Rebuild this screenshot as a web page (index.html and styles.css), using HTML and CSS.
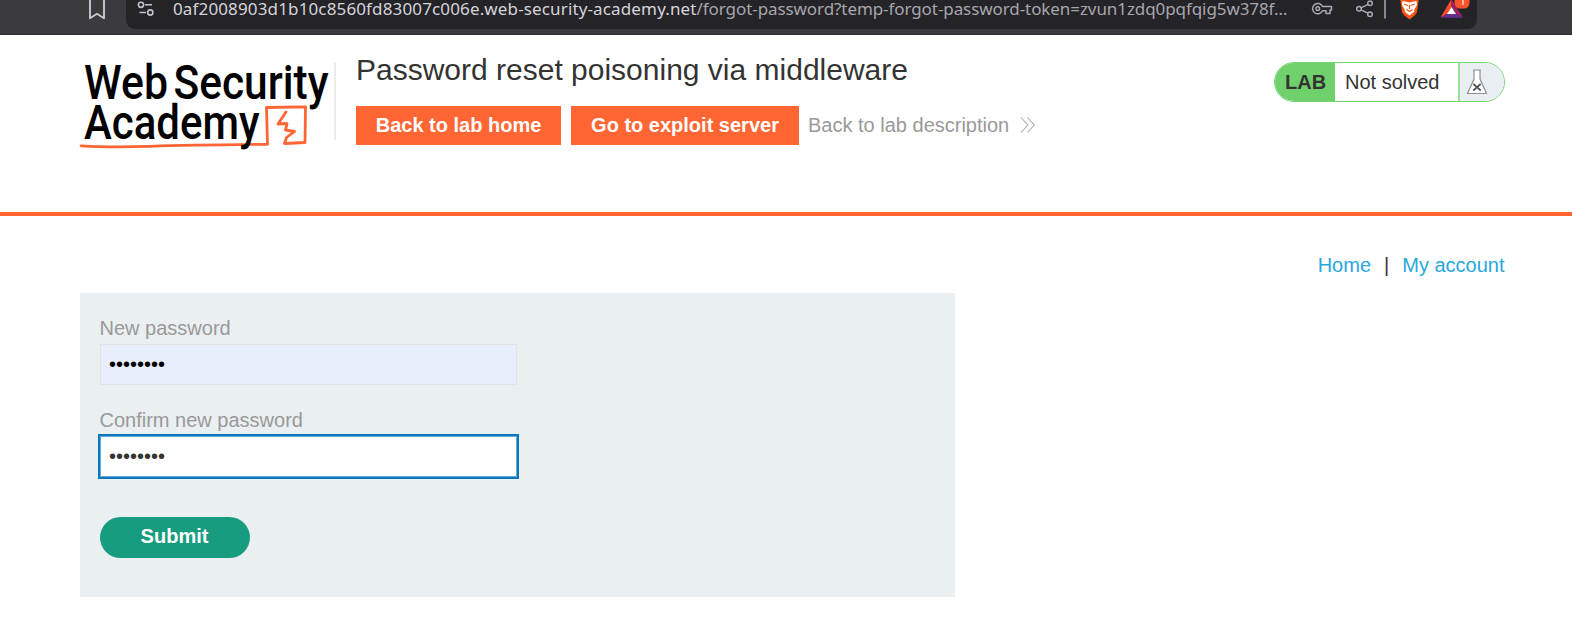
FILE: index.html
```html
<!DOCTYPE html>
<html lang="en">
<head>
<meta charset="utf-8">
<title>Password reset poisoning via middleware</title>
<link rel="stylesheet" href="styles.css">
</head>
<body>
<div class="browser">
  <svg class="bookmark" width="18" height="20" viewBox="0 0 18 20"><path d="M2 -2V18.300L9 13.800L16 18.300V-2" fill="none" stroke="#c9c8cd" stroke-width="1.900" stroke-linejoin="round"/></svg>
  <div class="address">
    <svg class="tune" width="18" height="17" viewBox="0 0 18 17" fill="none" stroke="#c4c3c9" stroke-width="1.600"><circle cx="4" cy="4.800" r="2.600"/><path d="M8 4.800H15M2.500 12.500H9"/><circle cx="13.300" cy="12.500" r="2.600"/></svg>
    <div class="url"><span class="domain">0af2008903d1b10c8560fd83007c006e.web-security-academy.net</span><span class="path">/forgot-password?temp-forgot-password-token=zvun1zdq0pqfqig5w378f…</span></div>
    <svg class="tools" width="170" height="29" viewBox="1310 0 170 29" fill="none">
      <g stroke="#aaa9b0" stroke-width="1.500"><path d="M1322.500 6.500H1331.500V10H1330V13.500H1326V10.800H1322.500A5.200 5.200 0 1 1 1322.500 6.500Z" stroke-linejoin="round"/><circle cx="1317.800" cy="8.600" r="1.800"/>
      <circle cx="1359" cy="8.800" r="2.300"/><circle cx="1370" cy="3.300" r="2.300"/><circle cx="1370" cy="14.200" r="2.300"/><path d="M1361 7.800L1368 4.300M1361 9.800L1368 13.200"/></g>
      <path d="M1385 0V18.500" stroke="#aaa9b0" stroke-width="1.500"/>
      <path d="M1400 -2H1419L1417 12Q1416 15 1409.500 19.500Q1403 15 1402 12Z" fill="#fb5412"/>
      <path d="M1402.500 1L1409.500 2.500L1416.500 1L1417 5L1414.500 9L1414 12L1409.500 15.500L1405 12L1404.500 9L1402 5Z" fill="#fff"/>
      <path d="M1404 4L1408 5.500M1415 4L1411 5.500M1409.500 5V9M1406.500 9.500L1409.500 11.500L1412.500 9.500" stroke="#fb5412" stroke-width="1.300"/>
      <path d="M1451.500 -1L1440.500 17.500L1447 14L1451.500 7Z" fill="#ff4a2c"/>
      <path d="M1451.500 -1L1463 17.500L1456 14L1451.500 7Z" fill="#9e1f63"/>
      <path d="M1440.500 17.800H1463L1456 14H1447Z" fill="#662d91"/>
      <path d="M1451.500 7L1447 14H1456Z" fill="#fff"/>
      <rect x="1454.500" y="-8" width="15" height="16.500" rx="5.500" fill="#fb542b"/><path d="M1463 0V5" stroke="#ffd5c8" stroke-width="1.500"/>
    </svg>
  </div>
</div>
<header class="lab-header">
  <svg class="logo" width="256" height="100" viewBox="80 55 256 100">
    <g class="logo-text"><text x="84" y="98.500" textLength="84" lengthAdjust="spacingAndGlyphs">Web</text><text x="173.500" y="98.500" textLength="155" lengthAdjust="spacingAndGlyphs">Security</text></g>
    <path d="M81 145.800Q110 147.500 150 146.300T267.500 144.300L266.500 107.500L305.500 106.800L305 142.500L284.500 143.500L286.500 137.500L294.500 131.500L285.500 130L287 123.500L278 124L286 112" fill="none" stroke="#ff6633" stroke-width="2.800" stroke-linejoin="round" stroke-linecap="round"/>
    <g class="logo-text"><text x="84" y="139" textLength="175.500" lengthAdjust="spacingAndGlyphs">Academy</text></g>
    <path d="M335 62V140" stroke="#e4e4e4" stroke-width="1.500"/>
  </svg>
  <div class="heading">
    <h1>Password reset poisoning via middleware</h1>
    <div class="actions">
      <a class="button">Back to lab home</a>
      <a class="button second">Go to exploit server</a>
      <a class="description">Back to lab description<svg width="16" height="16" viewBox="0 0 16 16" fill="none" stroke="#aaa" stroke-width="1.100"><path d="M1 .5L7.800 8L1 15.500M7.500 .5L14.300 8L7.500 15.500"/></svg></a>
    </div>
  </div>
  <div class="status"><b>LAB</b><span>Not solved</span><i><svg width="22" height="28" viewBox="0 0 22 28" fill="#fff" stroke="#8d9192" stroke-width="1.200"><path d="M7 2H15M8 2.500V11L1.500 25.500H20.500L14 11V2.500"/><path d="M7.300 15.800L14.700 22.500M14.700 15.800L7.300 22.500" stroke="#4b4e4f" stroke-width="1.700"/></svg></i></div>
</header>
<main>
  <nav><a>Home</a><span>|</span><a>My account</a></nav>
  <form>
    <label for="p1">New password</label>
    <input id="p1" class="filled" type="password" value="peterpet">
    <label for="p2">Confirm new password</label>
    <input id="p2" class="focused" type="password" value="peterpet">
    <button type="button">Submit</button>
  </form>
</main>
</body>
</html>
```
FILE: styles.css
```css
* { box-sizing: border-box; }
body { margin: 0; height: 621px; overflow: hidden; background: #fff; color: #333332; font: 20px/24px "Liberation Sans", Arial, sans-serif; }
svg { display: block; flex: none; }
.browser { height: 35px; background: #3b3a3f; border-bottom: 1px solid #29282b; display: flex; align-items: flex-start; padding-left: 88px; }
.address { width: 1351px; height: 29px; margin-left: 20px; background: #242328; border-radius: 0 0 9px 9px; display: flex; padding-left: 11px; }
.url { flex: none; margin: -3px 0 0 18px; width: 1130px; white-space: nowrap; color: #a7a6ad; font: 17px/24px "Noto Sans", sans-serif; }
.domain { color: #d5d4da; letter-spacing: .14px; }
.path { letter-spacing: -.08px; }
.tools { margin-left: 7px; }
.lab-header { height: 181px; border-bottom: 4px solid #ff6633; display: flex; padding: 20px 67px 0 80px; }
.logo { overflow: visible; }
.logo-text { font: 500 47.5px Roboto, sans-serif; fill: #000; }
.heading { padding-left: 20px; }
h1 { margin: 0; font-size: 30px; line-height: 30px; font-weight: 400; white-space: nowrap; }
.actions { display: flex; align-items: center; margin-top: 21px; }
.button { display: flex; align-items: center; justify-content: center; width: 205px; height: 39px; background: #ff6633; color: #fff; font-weight: 700; padding-bottom: 1px; }
.second { width: 228px; margin-left: 10px; }
.description { display: flex; align-items: center; margin-left: 9px; padding-bottom: 1px; gap: 11px; color: #999; }
.status { display: flex; width: 231px; height: 40px; margin: 7px 0 0 auto; border: 1px solid #73d673; border-radius: 20px; overflow: hidden; }
.status b { width: 60px; padding-left: 10px; line-height: 39px; background: #70d16c; }
.status span { width: 123px; padding-left: 10px; line-height: 38px; }
.status i { flex: 1; border-left: 2px solid #99e399; background: #e9eef2; padding: 5px 0 0 6px; }
main { padding: 36px 67.5px 0 79.5px; }
nav { display: flex; justify-content: flex-end; gap: 13px; height: 40.500px; line-height: 27px; }
nav a { color: #29a7de; }
form { width: 875px; height: 304.500px; background: #eaeff2; padding: 23px 20px; display: flex; flex-direction: column; align-items: flex-start; }
label { color: #999; height: 24px; }
input { width: 417px; height: 41px; margin: 4.500px 0 22.500px; padding: 0 8.500px; border: 1px solid #e3e3e5; font: 20px/24px "Liberation Sans", Arial, sans-serif; color: #333; outline: none; }
.filled { background: #e8eefc; color: #000; }
.focused { background: #fff; border-color: #68a9d6; outline: 2px solid #0877bd; }
button { width: 150px; height: 41px; margin-top: 17.500px; border: 0; border-radius: 21px; background: #189c80; color: #fff; font: 700 20px "Liberation Sans", Arial, sans-serif; padding: 0 0 2px; }
```
